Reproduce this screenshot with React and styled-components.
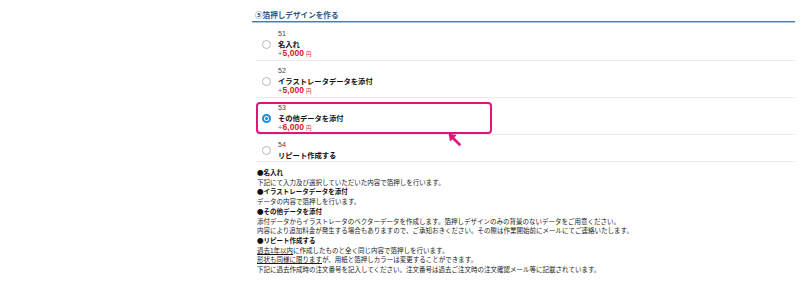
import React from 'react';
import styled, { createGlobalStyle } from 'styled-components';

const GlobalStyle = createGlobalStyle`
  html, body {
    margin: 0;
    padding: 0;
    background: #fff;
  }
  body {
    font-family: "Noto Sans CJK JP", "Noto Sans", sans-serif;
    color: #222;
  }
`;

const options = [
  { no: 51, name: '名入れ', price: '5,000' },
  { no: 52, name: 'イラストレータデータを添付', price: '5,000' },
  { no: 53, name: 'その他データを添付', price: '6,000', checked: true },
  { no: 54, name: 'リピート作成する' },
];

const App = () => {
  return (
    <>
      <GlobalStyle />
      <Page>
        <Section>
          <Heading>⑤箔押しデザインを作る</Heading>
          <OptionList>
            {options.map((o) => (
              <OptionRow key={o.no}>
                <Radio $checked={o.checked} />
                <OptionText>
                  <OptionNo>{o.no}</OptionNo>
                  <OptionName>{o.name}</OptionName>
                  {o.price && (
                    <Price>
                      <span className="plus">+</span>
                      <span className="amount">{o.price}</span>
                      <span className="yen">円</span>
                    </Price>
                  )}
                </OptionText>
                {o.checked && (
                  <>
                    <Highlight />
                    <Arrow viewBox="0 0 12 12">
                      <path d="M1 1 L10.5 10.5" stroke="#e0157a" strokeWidth="2.6" strokeLinecap="round" />
                      <path d="M0.6 0.6 L7 1.3 L1.3 7 Z" fill="#e0157a" stroke="#e0157a" strokeWidth="1" strokeLinejoin="round" />
                    </Arrow>
                  </>
                )}
              </OptionRow>
            ))}
          </OptionList>
          <Notes>
            <NoteTitle>●名入れ</NoteTitle>
            <p>下記にて入力及び選択していただいた内容で箔押しを行います。</p>
            <NoteTitle>●イラストレータデータを添付</NoteTitle>
            <p>データの内容で箔押しを行います。</p>
            <NoteTitle>●その他データを添付</NoteTitle>
            <p>添付データからイラストレータのベクターデータを作成します。箔押しデザインのみの背景のないデータをご用意ください。</p>
            <p>内容により追加料金が発生する場合もありますので、ご承知おきください。その際は作業開始前にメールにてご連絡いたします。</p>
            <NoteTitle>●リピート作成する</NoteTitle>
            <p><u>過去1年以内</u>に作成したものと全く同じ内容で箔押しを行います。</p>
            <p><u>形状も同様に限ります</u>が、用紙と箔押しカラーは変更することができます。</p>
            <p>下記に過去作成時の注文番号を記入してください。注文番号は過去ご注文時の注文確認メール等に記載されています。</p>
          </Notes>
        </Section>
      </Page>
    </>
  );
};

const Page = styled.div`
  width: 800px;
  height: 287px;
  overflow: hidden;
  padding-left: 252px;
  box-sizing: border-box;
`;

const Section = styled.div`
  width: 543px;
`;

const Heading = styled.div`
  height: 22px;
  box-sizing: border-box;
  padding: 10px 0 0 3px;
  font-size: 7.6px;
  line-height: 10px;
  font-weight: 700;
  color: #2a5688;
  border-bottom: 1px solid #4c78aa;
  box-shadow: 0 1px 0 #abc3de;
  margin-bottom: 2px;
`;

const OptionList = styled.div`
  display: flex;
  flex-direction: column;
  padding-left: 4px;
`;

const OptionRow = styled.div`
  position: relative;
  display: flex;
  align-items: center;
  gap: 7px;
  padding: 5px 0 1px 6px;
  border-bottom: 1px solid #ececec;
`;

const Radio = styled.span`
  width: 9px;
  height: 9px;
  box-sizing: border-box;
  border-radius: 50%;
  flex-shrink: 0;
  border: ${(p) => (p.$checked ? '2px solid #1f8ce0' : '1px solid #b9b9b9')};
  background: ${(p) => (p.$checked ? 'radial-gradient(circle, #1f8ce0 0 1.2px, #fff 1.6px)' : '#fff')};
`;

const OptionText = styled.div`
  display: flex;
  flex-direction: column;
`;

const OptionNo = styled.div`
  font-family: "Liberation Sans", Arial, sans-serif;
  font-size: 7px;
  height: 10px;
  line-height: 10px;
  color: #444;
`;

const OptionName = styled.div`
  font-size: 7.3px;
  height: 10px;
  line-height: 10px;
  font-weight: 700;
  color: #111;
`;

const Price = styled.div`
  height: 10px;
  line-height: 9px;
  display: flex;
  align-items: baseline;
  span {
    line-height: 9px;
  }
  .plus {
    font-family: "Liberation Sans", Arial, sans-serif;
    font-size: 7px;
    color: #666;
    margin-right: 0.5px;
  }
  .amount {
    font-family: "Liberation Sans", Arial, sans-serif;
    font-size: 8.5px;
    font-weight: 700;
    color: #d2231d;
  }
  .yen {
    font-size: 5.5px;
    color: #d2231d;
    margin-left: 2px;
  }
`;

const Highlight = styled.div`
  position: absolute;
  top: 4px;
  bottom: 0;
  left: 0;
  width: 236px;
  border: 2px solid #e0157a;
  border-radius: 4px;
  box-sizing: border-box;
  pointer-events: none;
`;

const Arrow = styled.svg`
  position: absolute;
  left: 193px;
  top: 36px;
  width: 12px;
  height: 12px;
  overflow: visible;
`;

const Notes = styled.div`
  padding: 6px 0 0 5px;
  font-size: 6.5px;
  line-height: 9.7px;
  color: #1a1a1a;
  p {
    margin: 0;
    white-space: nowrap;
  }
  u {
    text-underline-offset: 1px;
  }
`;

const NoteTitle = styled.div`
  font-weight: 700;
  color: #111;
`;

export default App;
